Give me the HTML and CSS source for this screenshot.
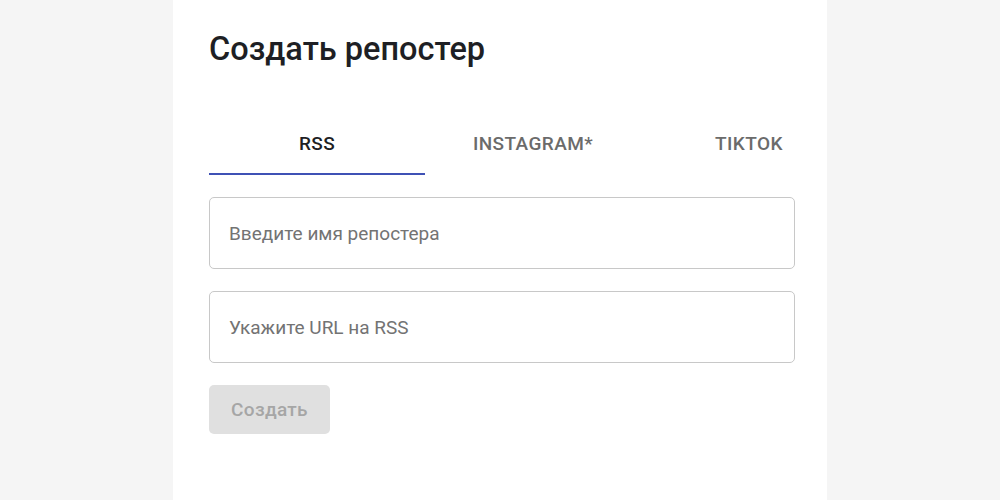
FILE: index.html
```html
<!DOCTYPE html>
<html lang="ru">
<head>
<meta charset="utf-8">
<title>Создать репостер</title>
<link rel="stylesheet" href="styles.css">
</head>
<body>
<main class="card">
  <h1 class="title">Создать репостер</h1>
  <div class="tabs">
    <button class="tab tab-active">RSS</button>
    <button class="tab">INSTAGRAM*</button>
    <button class="tab">TIKTOK</button>
  </div>
  <form class="form">
    <input class="field" type="text" placeholder="Введите имя репостера">
    <input class="field" type="text" placeholder="Укажите URL на RSS">
    <button class="submit" type="button" disabled>Создать</button>
  </form>
</main>
</body>
</html>
```
FILE: styles.css
```css
html, body {
  margin: 0;
  padding: 0;
  height: 100%;
}
body {
  background: #f5f5f5;
  font-family: Roboto, "Noto Sans", Arial, sans-serif;
  overflow: hidden;
}
.card {
  box-sizing: border-box;
  width: 654px;
  min-height: 100%;
  margin: 0 auto;
  background: #ffffff;
  padding: 29px 32px 0 36px;
}
.title {
  margin: 0;
  font-size: 32.5px;
  font-weight: 500;
  line-height: 40px;
  color: #1e1f24;
}
.tabs {
  display: flex;
  margin-top: 42px;
  overflow: hidden;
}
.tab {
  flex: 0 0 216px;
  height: 64px;
  border: 0;
  background: none;
  padding: 3px 0 0 0;
  font-family: inherit;
  font-size: 19px;
  font-weight: 500;
  letter-spacing: 0.4px;
  text-transform: uppercase;
  color: #6b6b6b;
  border-bottom: 2px solid transparent;
  box-sizing: border-box;
}
.tab-active {
  color: #1e1f24;
  border-bottom-color: #3f51b5;
}
.form {
  display: flex;
  flex-direction: column;
  align-items: flex-start;
  gap: 22px;
  margin-top: 22px;
}
.field {
  box-sizing: border-box;
  width: 586px;
  height: 72px;
  border: 1px solid #c8c8c8;
  border-radius: 5px;
  padding: 0 19px;
  font-family: inherit;
  font-size: 19px;
  color: #222;
  outline: none;
}
.field::placeholder {
  color: #737373;
}
.submit {
  width: 121px;
  height: 49px;
  border: 0;
  border-radius: 5px;
  background: #e0e0e0;
  color: #a6a6a6;
  font-family: inherit;
  font-size: 19px;
  font-weight: 500;
  letter-spacing: 0.3px;
}
```
